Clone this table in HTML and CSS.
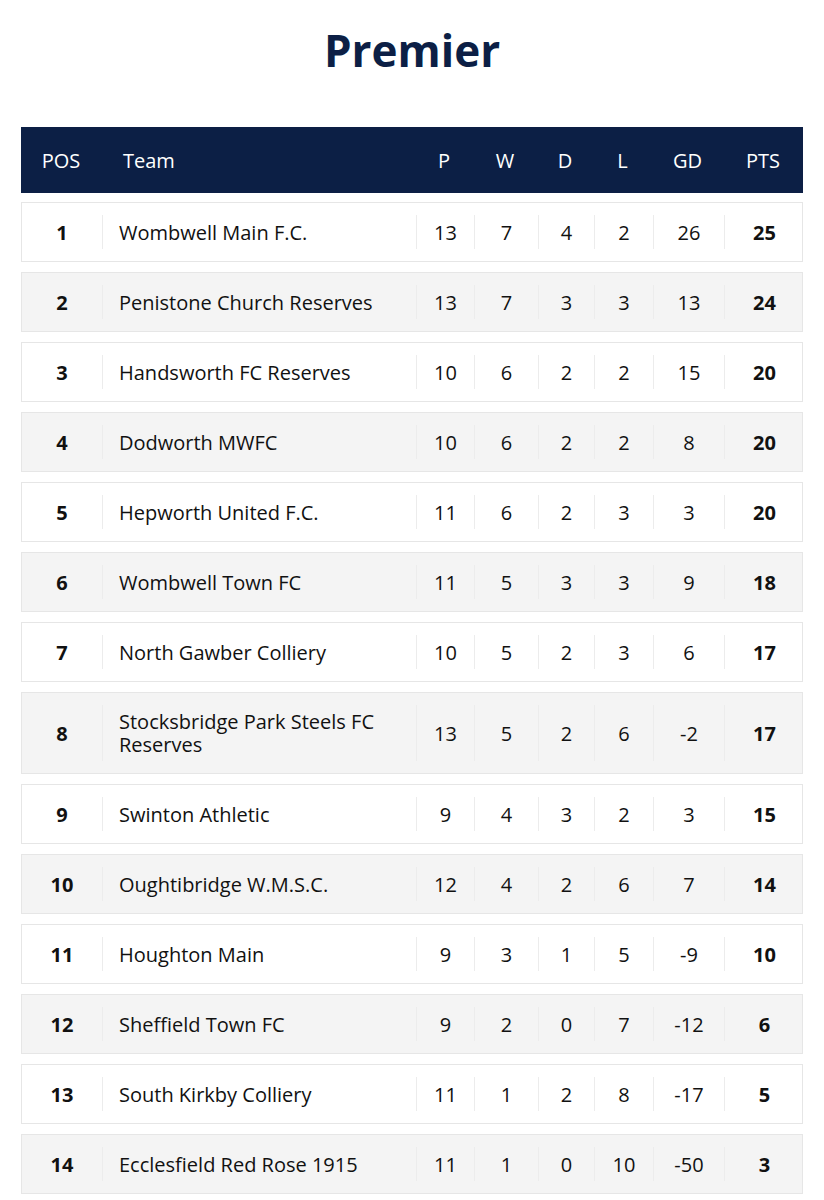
FILE: index.html
```html
<!DOCTYPE html>
<html lang="en">
<head>
<meta charset="utf-8">
<title>Premier</title>
<link rel="stylesheet" href="styles.css">
</head>
<body>
<main class="page">
  <h1 class="title">Premier</h1>
  <div class="table">
    <div class="head">
      <div class="hc c-pos">POS</div>
      <div class="hc c-team">Team</div>
      <div class="hc">P</div>
      <div class="hc">W</div>
      <div class="hc">D</div>
      <div class="hc">L</div>
      <div class="hc">GD</div>
      <div class="hc">PTS</div>
    </div>
    <div class="row"><div class="cell c-pos">1</div><div class="cell c-team">Wombwell Main F.C.</div><div class="cell">13</div><div class="cell">7</div><div class="cell">4</div><div class="cell">2</div><div class="cell">26</div><div class="cell c-pts">25</div></div>
    <div class="row"><div class="cell c-pos">2</div><div class="cell c-team">Penistone Church Reserves</div><div class="cell">13</div><div class="cell">7</div><div class="cell">3</div><div class="cell">3</div><div class="cell">13</div><div class="cell c-pts">24</div></div>
    <div class="row"><div class="cell c-pos">3</div><div class="cell c-team">Handsworth FC Reserves</div><div class="cell">10</div><div class="cell">6</div><div class="cell">2</div><div class="cell">2</div><div class="cell">15</div><div class="cell c-pts">20</div></div>
    <div class="row"><div class="cell c-pos">4</div><div class="cell c-team">Dodworth MWFC</div><div class="cell">10</div><div class="cell">6</div><div class="cell">2</div><div class="cell">2</div><div class="cell">8</div><div class="cell c-pts">20</div></div>
    <div class="row"><div class="cell c-pos">5</div><div class="cell c-team">Hepworth United F.C.</div><div class="cell">11</div><div class="cell">6</div><div class="cell">2</div><div class="cell">3</div><div class="cell">3</div><div class="cell c-pts">20</div></div>
    <div class="row"><div class="cell c-pos">6</div><div class="cell c-team">Wombwell Town FC</div><div class="cell">11</div><div class="cell">5</div><div class="cell">3</div><div class="cell">3</div><div class="cell">9</div><div class="cell c-pts">18</div></div>
    <div class="row"><div class="cell c-pos">7</div><div class="cell c-team">North Gawber Colliery</div><div class="cell">10</div><div class="cell">5</div><div class="cell">2</div><div class="cell">3</div><div class="cell">6</div><div class="cell c-pts">17</div></div>
    <div class="row"><div class="cell c-pos">8</div><div class="cell c-team"><span class="team-name">Stocksbridge Park Steels FC Reserves</span></div><div class="cell">13</div><div class="cell">5</div><div class="cell">2</div><div class="cell">6</div><div class="cell">-2</div><div class="cell c-pts">17</div></div>
    <div class="row"><div class="cell c-pos">9</div><div class="cell c-team">Swinton Athletic</div><div class="cell">9</div><div class="cell">4</div><div class="cell">3</div><div class="cell">2</div><div class="cell">3</div><div class="cell c-pts">15</div></div>
    <div class="row"><div class="cell c-pos">10</div><div class="cell c-team">Oughtibridge W.M.S.C.</div><div class="cell">12</div><div class="cell">4</div><div class="cell">2</div><div class="cell">6</div><div class="cell">7</div><div class="cell c-pts">14</div></div>
    <div class="row"><div class="cell c-pos">11</div><div class="cell c-team">Houghton Main</div><div class="cell">9</div><div class="cell">3</div><div class="cell">1</div><div class="cell">5</div><div class="cell">-9</div><div class="cell c-pts">10</div></div>
    <div class="row"><div class="cell c-pos">12</div><div class="cell c-team">Sheffield Town FC</div><div class="cell">9</div><div class="cell">2</div><div class="cell">0</div><div class="cell">7</div><div class="cell">-12</div><div class="cell c-pts">6</div></div>
    <div class="row"><div class="cell c-pos">13</div><div class="cell c-team">South Kirkby Colliery</div><div class="cell">11</div><div class="cell">1</div><div class="cell">2</div><div class="cell">8</div><div class="cell">-17</div><div class="cell c-pts">5</div></div>
    <div class="row"><div class="cell c-pos">14</div><div class="cell c-team">Ecclesfield Red Rose 1915</div><div class="cell">11</div><div class="cell">1</div><div class="cell">0</div><div class="cell">10</div><div class="cell">-50</div><div class="cell c-pts">3</div></div>
  </div>
</main>
</body>
</html>
```

FILE: styles.css
```css
* { box-sizing: border-box; }

html, body {
  margin: 0;
  padding: 0;
  background: #ffffff;
}

body {
  font-family: "Open Sans", "Noto Sans", "Liberation Sans", sans-serif;
  color: #111111;
}

.page {
  padding: 0 21px;
}

.title {
  margin: 0;
  padding-top: 22px;
  height: 127px;
  text-align: center;
  font-size: 44px;
  line-height: 56px;
  font-weight: 700;
  color: #0c1f45;
}

.table {
  display: flex;
  flex-direction: column;
  gap: 10px;
}

.head,
.row {
  display: grid;
  grid-template-columns: 80px 314px 58px 64px 56px 59px 71px 80px;
}

.head {
  background: #0c1f45;
  color: #ffffff;
  height: 66px;
  align-items: center;
  margin-bottom: -1px;
  padding-top: 2px;
}

.hc {
  text-align: center;
  font-size: 20px;
  line-height: 26px;
}

.hc.c-team {
  text-align: left;
  padding-left: 22px;
}

.row {
  border: 1px solid #e6e6e6;
  background: #ffffff;
}

.row:nth-child(odd) {
  background: #f4f4f4;
}

.cell {
  margin: 12px 0;
  padding: 5px 4px;
  min-height: 34px;
  display: flex;
  align-items: center;
  justify-content: center;
  font-size: 20px;
  line-height: 23px;
  border-left: 1px solid #ececec;
  padding-top: 5px;
  padding-bottom: 5px;
}

.cell.c-pos {
  border-left: none;
  font-weight: 700;
}

.cell.c-team {
  justify-content: flex-start;
  padding-left: 16px;
  padding-right: 40px;
}

.team-name {
  display: block;
}

.cell.c-pts {
  font-weight: 700;
}
```
